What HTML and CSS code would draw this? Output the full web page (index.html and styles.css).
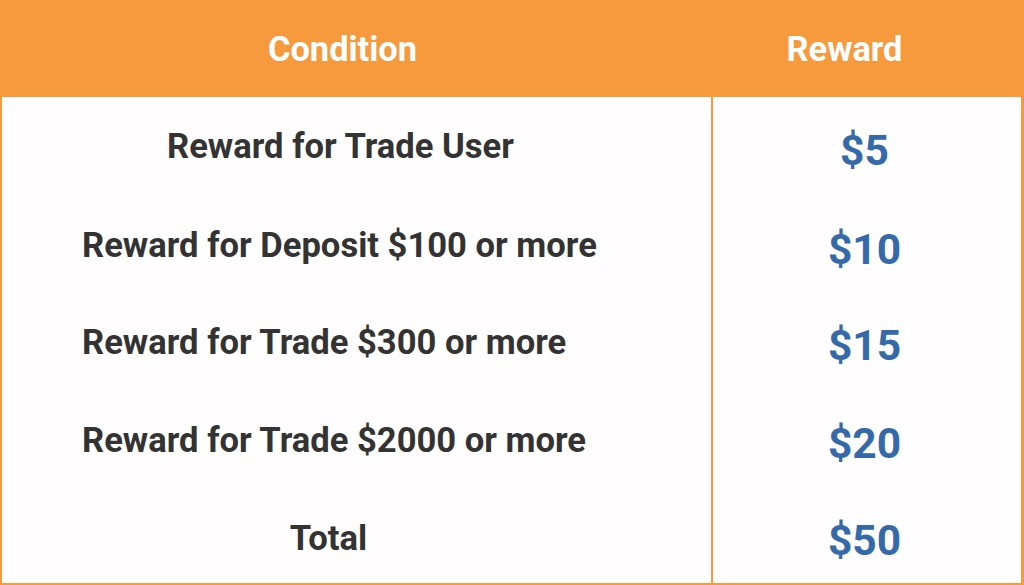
FILE: index.html
```html
<!DOCTYPE html>
<html>
<head>
<meta charset="utf-8">
<link rel="stylesheet" href="styles.css">
</head>
<body>
<div class="table">
  <div class="head">
    <div class="th th-cond">Condition</div>
    <div class="th th-rew">Reward</div>
  </div>
  <div class="body">
    <div class="row r1"><div class="cond center">Reward for Trade User</div><div class="val">$5</div></div>
    <div class="row r2"><div class="cond left">Reward for Deposit $100 or more</div><div class="val">$10</div></div>
    <div class="row r3"><div class="cond left">Reward for Trade $300 or more</div><div class="val">$15</div></div>
    <div class="row r4"><div class="cond left">Reward for Trade $2000 or more</div><div class="val">$20</div></div>
    <div class="row r5"><div class="cond total">Total</div><div class="val">$50</div></div>
  </div>
</div>
</body>
</html>
```
FILE: styles.css
```css
html, body {
  margin: 0;
  padding: 0;
  background: #fffdfd;
}
.table {
  width: 1024px;
  height: 585px;
  box-sizing: border-box;
  font-family: Roboto, "Liberation Sans", sans-serif;
  font-weight: 700;
  display: flex;
  flex-direction: column;
}
.head {
  height: 97px;
  background: #f79a3e;
  display: grid;
  grid-template-columns: 711px 1fr;
  align-items: center;
  color: #ffffff;
  font-size: 34.4px;
}
.th { text-align: center; }
.th-cond { padding-right: 26px; }
.th-rew { padding-right: 46px; }
.body {
  flex: 1;
  border-left: 2px solid #f79a3e;
  border-right: 3px solid #f79a3e;
  border-bottom: 2px solid #f79a3e;
  display: grid;
  grid-template-rows: repeat(5, 1fr);
  background: #fffdfd;
}
.row {
  display: grid;
  grid-template-columns: 711px 1fr;
  align-items: center;
}
.cond {
  color: #333333;
  font-size: 34.6px;
  border-right: 2px solid #f79a3e;
  height: 100%;
  display: flex;
  align-items: center;
  box-sizing: border-box;
}
.cond.center { justify-content: center; padding-right: 32px; }
.cond.left { padding-left: 80px; }
.cond.total { justify-content: center; padding-right: 56px; }
.r2 .cond, .r3 .cond { padding-top: 4px; }
.r4 .cond { padding-top: 6px; }
.r5 .cond { padding-top: 8px; }
.val {
  color: #346aaa;
  font-size: 42.5px;
  text-align: center;
  padding-top: 10px;
  padding-right: 5px;
}
.r2 .val { padding-top: 14px; }
.r3 .val, .r4 .val, .r5 .val { padding-top: 12px; }
```
